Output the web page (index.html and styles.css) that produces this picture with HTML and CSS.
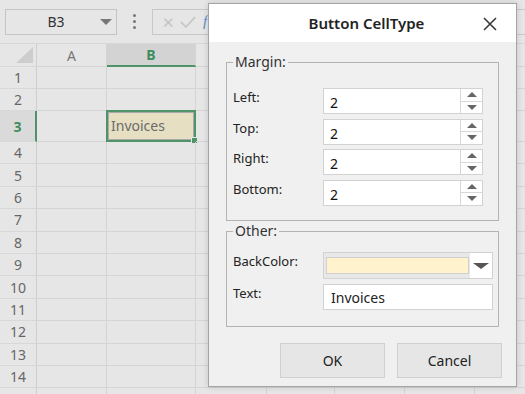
FILE: index.html
```html
<!DOCTYPE html>
<html>
  <head>
    <meta charset="utf-8">
    <title>Button CellType</title>
    <link rel="stylesheet" href="styles.css">
  </head>
  <body>
    <div class="sheet">
      <div class="toolbar">
        <div class="namebox"><span>B3</span><i class="tri"></i></div>
        <div class="dots"><b></b><b></b><b></b></div>
        <div class="fbox">
          <span class="fx-icon">&#x2715;</span>
          <svg class="fx-check" width="16" height="12" viewBox="0 0 16 12"><path d="M1 6 L6 11 L15 1" fill="none" stroke="#c4c4c4" stroke-width="1.6"/></svg>
          <span class="fx">f</span>
        </div>
      </div>
      <div class="grid">
        <div class="row head">
          <div class="rh corner"><i></i></div>
          <div class="c a">A</div><div class="c b sel">B</div><div class="c cc"></div><div class="c d"></div><div class="c e"></div><div class="c f"></div><div class="c g"></div>
        </div>
        <div class="row r1"><div class="rh">1</div><div class="c a"></div><div class="c b"></div><div class="c cc"></div><div class="c d"></div><div class="c e"></div><div class="c f"></div><div class="c g"></div></div>
        <div class="row r1"><div class="rh">2</div><div class="c a"></div><div class="c b"></div><div class="c cc"></div><div class="c d"></div><div class="c e"></div><div class="c f"></div><div class="c g"></div></div>
        <div class="row r3"><div class="rh sel">3</div><div class="c a"></div><div class="c b active"><div class="cellbtn">Invoices</div><i class="handle"></i></div><div class="c cc"></div><div class="c d"></div><div class="c e"></div><div class="c f"></div><div class="c g"></div></div>
        <div class="row"><div class="rh">4</div><div class="c a"></div><div class="c b"></div><div class="c cc"></div><div class="c d"></div><div class="c e"></div><div class="c f"></div><div class="c g"></div></div>
        <div class="row"><div class="rh">5</div><div class="c a"></div><div class="c b"></div><div class="c cc"></div><div class="c d"></div><div class="c e"></div><div class="c f"></div><div class="c g"></div></div>
        <div class="row"><div class="rh">6</div><div class="c a"></div><div class="c b"></div><div class="c cc"></div><div class="c d"></div><div class="c e"></div><div class="c f"></div><div class="c g"></div></div>
        <div class="row"><div class="rh">7</div><div class="c a"></div><div class="c b"></div><div class="c cc"></div><div class="c d"></div><div class="c e"></div><div class="c f"></div><div class="c g"></div></div>
        <div class="row"><div class="rh">8</div><div class="c a"></div><div class="c b"></div><div class="c cc"></div><div class="c d"></div><div class="c e"></div><div class="c f"></div><div class="c g"></div></div>
        <div class="row"><div class="rh">9</div><div class="c a"></div><div class="c b"></div><div class="c cc"></div><div class="c d"></div><div class="c e"></div><div class="c f"></div><div class="c g"></div></div>
        <div class="row"><div class="rh">10</div><div class="c a"></div><div class="c b"></div><div class="c cc"></div><div class="c d"></div><div class="c e"></div><div class="c f"></div><div class="c g"></div></div>
        <div class="row"><div class="rh">11</div><div class="c a"></div><div class="c b"></div><div class="c cc"></div><div class="c d"></div><div class="c e"></div><div class="c f"></div><div class="c g"></div></div>
        <div class="row"><div class="rh">12</div><div class="c a"></div><div class="c b"></div><div class="c cc"></div><div class="c d"></div><div class="c e"></div><div class="c f"></div><div class="c g"></div></div>
        <div class="row"><div class="rh">13</div><div class="c a"></div><div class="c b"></div><div class="c cc"></div><div class="c d"></div><div class="c e"></div><div class="c f"></div><div class="c g"></div></div>
        <div class="row"><div class="rh">14</div><div class="c a"></div><div class="c b"></div><div class="c cc"></div><div class="c d"></div><div class="c e"></div><div class="c f"></div><div class="c g"></div></div>
        <div class="row"><div class="rh"></div><div class="c a"></div><div class="c b"></div><div class="c cc"></div><div class="c d"></div><div class="c e"></div><div class="c f"></div><div class="c g"></div></div>
      </div>
    </div>

    <div class="dialog">
      <div class="titlebar">
        <span class="title">Button CellType</span>
        <svg class="close" width="14" height="14" viewBox="0 0 14 14"><path d="M1 1 L13 13 M13 1 L1 13" stroke="#333" stroke-width="1.5"/></svg>
      </div>
      <div class="body">
        <fieldset class="group margin">
          <legend>Margin:</legend>
          <div class="field"><label>Left:</label><div class="spin"><span class="val">2</span><div class="arrows"><i class="up"></i><i class="down"></i></div></div></div>
          <div class="field"><label>Top:</label><div class="spin"><span class="val">2</span><div class="arrows"><i class="up"></i><i class="down"></i></div></div></div>
          <div class="field"><label>Right:</label><div class="spin"><span class="val">2</span><div class="arrows"><i class="up"></i><i class="down"></i></div></div></div>
          <div class="field"><label>Bottom:</label><div class="spin"><span class="val">2</span><div class="arrows"><i class="up"></i><i class="down"></i></div></div></div>
        </fieldset>
        <fieldset class="group other">
          <legend>Other:</legend>
          <div class="field pick"><label>BackColor:</label><div class="colorpick"><span class="swatch"></span><span class="drop"><i></i></span></div></div>
          <div class="field"><label>Text:</label><div class="textbox">Invoices</div></div>
        </fieldset>
        <div class="buttons">
          <button class="btn">OK</button>
          <button class="btn">Cancel</button>
        </div>
      </div>
    </div>
  </body>
</html>
```

FILE: styles.css
```css
body {
  margin: 0;
  width: 525px;
  height: 394px;
  overflow: hidden;
  background: #e6e6e6;
  font-family: "Noto Sans", "Open Sans", sans-serif;
  position: relative; }

/* spreadsheet (dimmed behind the dialog) */
.toolbar {
  height: 44px;
  display: flex;
  align-items: center;
  border-bottom: 1px solid #d6d6d6;
  box-sizing: border-box;
  padding-left: 5px; }
.namebox {
  width: 112px;
  height: 26px;
  box-sizing: border-box;
  border: 1px solid #c4c4c4;
  display: flex;
  align-items: center;
  font-size: 14px;
  color: #333; }
.namebox span { flex: 1; text-align: center; padding-left: 6px; }
.tri {
  width: 0; height: 0;
  border-left: 6px solid transparent;
  border-right: 6px solid transparent;
  border-top: 6px solid #777;
  margin-right: 4px; }
.dots {
  width: 35px;
  display: flex;
  flex-direction: column;
  align-items: center;
  gap: 3px; }
.dots b { width: 3px; height: 3px; background: #777; border-radius: 50%; }
.fbox {
  flex: 1;
  height: 26px;
  box-sizing: border-box;
  border: 1px solid #c8c8c8;
  border-right: none;
  display: flex;
  align-items: center;
  gap: 5px;
  padding-left: 9px;
  color: #c4c4c4; }
.fx-icon { font-size: 15px; }
.fx { color: #5a8ad0; font-style: italic; font-family: "Liberation Serif", serif; font-size: 15px; margin-left: 2px; }

.grid { display: flex; flex-direction: column; }
.row { display: flex; height: 22.4px; }
.row.head { height: 23px; }
.row.r1 { height: 22px; }
.row.r3 { height: 31px; }
.rh {
  width: 37px;
  flex: none;
  box-sizing: border-box;
  border-right: 1px solid #cfcfcf;
  border-bottom: 1px solid #d8d8d8;
  font-size: 14px;
  color: #666;
  text-align: center;
  display: flex;
  align-items: center;
  justify-content: center; }
.rh.sel { color: #3f8d5c; font-weight: bold; border-right: 2px solid #4f9468; background: #dadada; }
.corner { position: relative; }
.corner i {
  position: absolute; right: 3px; bottom: 3px;
  border-left: 17px solid transparent;
  border-bottom: 16px solid #cdcdcd; }
.c {
  flex: none;
  box-sizing: border-box;
  border-right: 1px solid #d4d4d4;
  border-bottom: 1px solid #d4d4d4;
  position: relative; }
.head .c {
  font-size: 14px;
  color: #777;
  display: flex;
  align-items: center;
  justify-content: center; }
.head .c.sel { background: #d3d3d3; color: #3f8d5c; font-weight: bold; border-bottom: 2px solid #4f9468; }
.a { width: 70px; }
.b { width: 89px; }
.cc { width: 71px; }
.d { width: 68px; }
.e { width: 70px; }
.f { width: 70px; }
.g { width: 70px; }
.active { border: 2px solid #4f9468; margin-left: -1px; width: 90px; margin-top: -1px; height: 32px; }
.cellbtn {
  margin: 0;
  height: 28px;
  width: 86px;
  box-sizing: border-box;
  background: #e6dfc2;
  border: 1px solid #a9a9a9;
  color: #6b6b6b;
  font-size: 14px;
  padding-left: 2px;
  line-height: 25px; }
.handle {
  position: absolute; right: -4px; bottom: -4px;
  width: 5px; height: 5px;
  background: #4f9468;
  border: 1px solid #e6e6e6; }

/* dialog */
.dialog {
  position: absolute;
  left: 208px; top: 3px;
  width: 309px; height: 384px;
  box-sizing: border-box;
  border: 1px solid #a4a4a4;
  background: #f0f0f0;
  box-shadow: 0 0 6px rgba(0,0,0,0.15);
  display: flex;
  flex-direction: column; }
.titlebar {
  height: 38px;
  background: #fff;
  display: flex;
  align-items: center;
  justify-content: center;
  position: relative; }
.title { font-size: 15px; font-weight: 600; color: #222; margin-left: 8px; }
.close { position: absolute; right: 19px; top: 13px; }
.body { padding: 13px 17px 0 17px; }
.group {
  margin: 0;
  border: 1px solid #b4b4b4;
  padding: 19px 0 10px 6px;
  min-width: 0; }
.group legend {
  font-size: 14px;
  color: #333;
  padding: 0 2px;
  margin-left: 0;
  line-height: 14px; }
.other { margin-top: 3px; padding-top: 14px; padding-bottom: 16px; }
.field { display: flex; align-items: flex-start; height: 26px; margin-bottom: 4.5px; }
.other .field { margin-bottom: 0; }
.other .field.pick { height: 27px; margin-bottom: 5px; }
.field label {
  width: 90px;
  font-size: 13px;
  color: #222;
  line-height: 18px; }
.spin {
  width: 160px;
  height: 26px;
  box-sizing: border-box;
  background: #fff;
  border: 1px solid #d2d2d2;
  display: flex; }
.val { flex: 1; font-size: 14px; color: #111; padding: 4px 0 0 6px; }
.arrows {
  width: 21px;
  display: flex;
  flex-direction: column;
  border-left: 1px solid #d8d8d8; }
.arrows i { flex: 1; display: flex; align-items: center; justify-content: center; }
.arrows .up { border-bottom: 1px solid #d8d8d8; }
.arrows .up::after {
  content: ""; border-left: 5px solid transparent; border-right: 5px solid transparent;
  border-bottom: 5px solid #666; }
.arrows .down::after {
  content: ""; border-left: 5px solid transparent; border-right: 5px solid transparent;
  border-top: 5px solid #666; }
.colorpick {
  width: 170px;
  height: 27px;
  box-sizing: border-box;
  border: 1px solid #d2d2d2;
  background: #e8e8e8;
  display: flex;
  align-items: center;
  padding-left: 2px; }
.swatch {
  width: 143px;
  height: 17px;
  box-sizing: border-box;
  background: #fff2cc;
  border: 1px solid #cfcfcf; }
.drop {
  flex: 1;
  height: 100%;
  background: #fff;
  margin-left: 1px;
  display: flex;
  align-items: center;
  justify-content: center; }
.drop i {
  border-left: 8px solid transparent; border-right: 8px solid transparent;
  border-top: 6px solid #555; }
.textbox {
  width: 170px;
  height: 26px;
  box-sizing: border-box;
  background: #fff;
  border: 1px solid #d2d2d2;
  font-size: 14px;
  color: #222;
  padding: 3px 0 0 7px; }
.buttons {
  display: flex;
  justify-content: flex-end;
  gap: 12px;
  margin-top: 16px;
  margin-right: -3px; }
.btn {
  width: 105px;
  height: 35px;
  background: #e6e6e6;
  border: 1px solid #d0d0d0;
  font-family: "Noto Sans", "Open Sans", sans-serif;
  font-size: 14px;
  color: #222; }
```
